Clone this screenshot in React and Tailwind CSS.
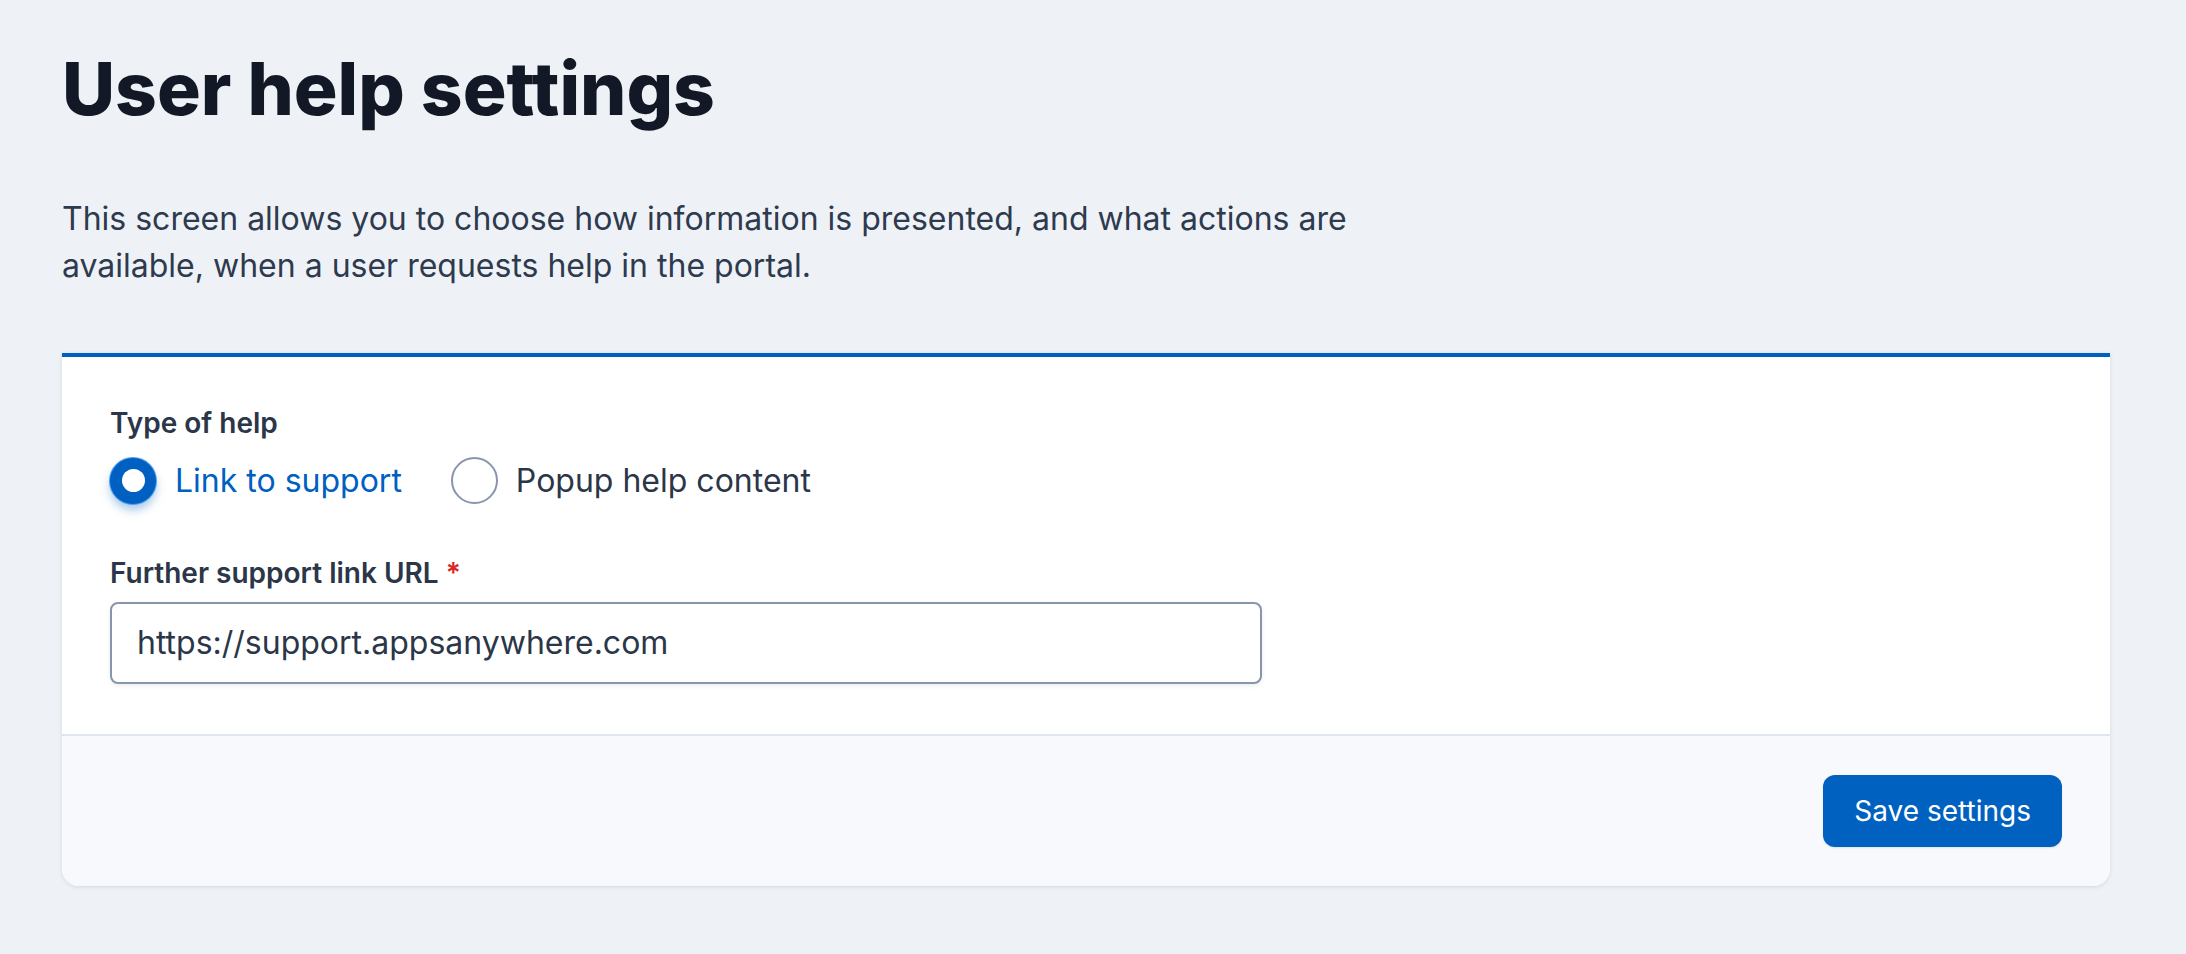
export default function App() {
  return (
    <main className="min-h-screen bg-[#eef2f7] font-['Inter',sans-serif] text-[#1e293b]">
      <div className="w-[2048px] ml-[62px] pt-[45px] pb-[60px]">
        <h1 className="text-[73px] leading-[88px] font-extrabold text-[#121826]">
          User help settings
        </h1>
        <p className="mt-[62px] max-w-[1370px] text-[32px] leading-[47px] text-[#2e3a4e]">
          This screen allows you to choose how information is presented, and what actions are
          available, when a user requests help in the portal.
        </p>

        <section className="mt-[64px] rounded-b-[17px] border-t-4 border-[#0060c1] bg-white shadow-[0_1px_4px_rgba(30,41,59,0.12)]">
          <div className="px-[48px] pt-[45px] pb-[50px]">
            <div className="text-[28px] leading-[42px] font-semibold text-[#2b3648]">
              Type of help
            </div>
            <div className="mt-[13px] flex items-center">
              <label className="flex items-center gap-[19px]">
                <span className="flex h-[46px] w-[46px] items-center justify-center rounded-full bg-[#0060c1] shadow-[0_0_0_1px_#4d9cf0,0_6px_10px_rgba(0,96,193,0.35)]">
                  <span className="h-[23px] w-[23px] rounded-full bg-white" />
                </span>
                <span className="text-[32px] leading-[42px] text-[#0060c1]">Link to support</span>
              </label>
              <label className="ml-[49px] flex items-center gap-[18px]">
                <span className="h-[47px] w-[47px] rounded-full border-2 border-[#8795ad] bg-white" />
                <span className="text-[32px] leading-[42px] text-[#2b3648]">Popup help content</span>
              </label>
            </div>

            <div className="mt-[48px] text-[28px] leading-[42px] font-semibold text-[#2b3648]">
              Further support link URL <span className="text-[#dc2626]">*</span>
            </div>
            <div className="mt-[8px] flex h-[82px] w-[1152px] items-center rounded-[8px] border-2 border-[#8795ad] bg-white px-[25px] shadow-[0_2px_4px_rgba(30,41,59,0.08)]">
              <span className="text-[32px] text-[#2b3648]">https://support.appsanywhere.com</span>
            </div>
          </div>

          <div className="flex justify-end rounded-b-[17px] border-t-2 border-[#e0e6ef] bg-[#f7f9fc] px-[48px] py-[39px]">
            <button className="h-[72px] rounded-[12px] bg-[#0061c1] px-[31px] text-[28px] text-white shadow-[0_1px_2px_rgba(0,0,0,0.1)]">
              Save settings
            </button>
          </div>
        </section>
      </div>
    </main>
  );
}
